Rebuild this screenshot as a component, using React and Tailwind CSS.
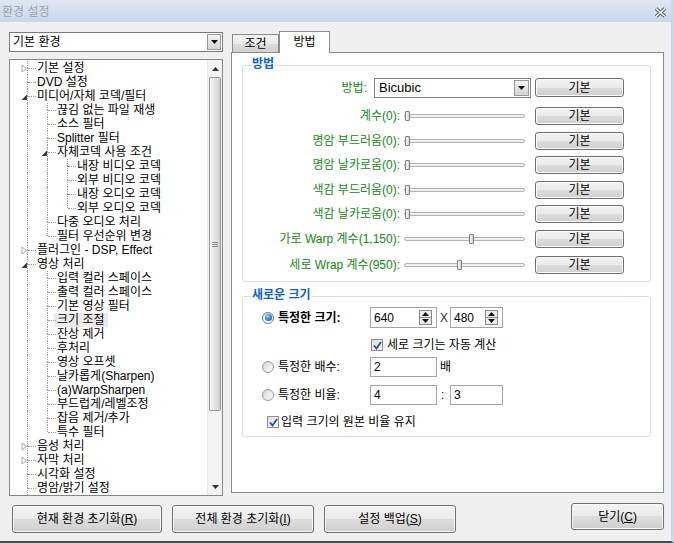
import React from "react";

const treeRows = [
  { t: "기본 설정", l: 0, e: false },
  { t: "DVD 설정", l: 0 },
  { t: "미디어/자체 코덱/필터", l: 0, e: true },
  { t: "끊김 없는 파일 재생", l: 1 },
  { t: "소스 필터", l: 1 },
  { t: "Splitter 필터", l: 1 },
  { t: "자체코덱 사용 조건", l: 1, e: true },
  { t: "내장 비디오 코덱", l: 2 },
  { t: "외부 비디오 코덱", l: 2 },
  { t: "내장 오디오 코덱", l: 2 },
  { t: "외부 오디오 코덱", l: 2 },
  { t: "다중 오디오 처리", l: 1 },
  { t: "필터 우선순위 변경", l: 1 },
  { t: "플러그인 - DSP, Effect", l: 0, e: false },
  { t: "영상 처리", l: 0, e: true },
  { t: "입력 컬러 스페이스", l: 1 },
  { t: "출력 컬러 스페이스", l: 1 },
  { t: "기본 영상 필터", l: 1 },
  { t: "크기 조절", l: 1, sel: true },
  { t: "잔상 제거", l: 1 },
  { t: "후처리", l: 1 },
  { t: "영상 오프셋", l: 1 },
  { t: "날카롭게(Sharpen)", l: 1 },
  { t: "(a)WarpSharpen", l: 1 },
  { t: "부드럽게/레벨조정", l: 1 },
  { t: "잡음 제거/추가", l: 1 },
  { t: "특수 필터", l: 1 },
  { t: "음성 처리", l: 0, e: false },
  { t: "자막 처리", l: 0, e: false },
  { t: "시각화 설정", l: 0 },
  { t: "명암/밝기 설정", l: 0 },
];

// does the line at level L continue below row i
const continues = (i, L) => {
  for (let j = i + 1; j < treeRows.length; j++) {
    if (treeRows[j].l < L) return false;
    if (treeRows[j].l === L) return true;
  }
  return L === 0;
};

const sliders = [
  { label: "계수(0):", pos: 0, mt: "mt-[10px]" },
  { label: "명암 부드러움(0):", pos: 0, mt: "mt-[7px]" },
  { label: "명암 날카로움(0):", pos: 0, mt: "mt-[6px]" },
  { label: "색감 부드러움(0):", pos: 0, mt: "mt-[7px]" },
  { label: "색감 날카로움(0):", pos: 0, mt: "mt-[6px]" },
  { label: "가로 Warp 계수(1,150):", pos: 64, mt: "mt-[7px]" },
  { label: "세로 Wrap 계수(950):", pos: 52, mt: "mt-[8px]" },
];

const Btn = ({ className, children }) => (
  <div
    className={`flex items-center justify-center border border-[#707070] rounded-[3px] bg-[linear-gradient(#f3f3f3_0%,#ebebeb_50%,#dddddd_50%,#cfcfcf_100%)] shadow-[inset_0_0_0_1px_#fbfbfb] text-black ${className}`}
  >
    {children}
  </div>
);

const DownArrow = () => (
  <svg width="7" height="4" viewBox="0 0 7 4">
    <polygon points="0,0 7,0 3.5,4" fill="#111" />
  </svg>
);

const Group = ({ label, className, children }) => (
  <div className={`relative border border-[#d5dfe5] rounded-[3px] ${className}`}>
    <span className="absolute left-[8px] top-[-9px] bg-white px-[1px] font-bold text-[#0b62d4] leading-[14px]">
      {label}
    </span>
    {children}
  </div>
);

const Radio = ({ on }) =>
  on ? (
    <div className="w-[12px] h-[12px] rounded-full border border-[#6d7b8a] bg-[linear-gradient(#dfe3e8,#ffffff)] flex items-center justify-center">
      <div className="w-[7px] h-[7px] rounded-full bg-[radial-gradient(circle_at_40%_35%,#9fe0ff_0%,#2a8fe0_45%,#0b4d95_100%)]" />
    </div>
  ) : (
    <div className="w-[12px] h-[12px] rounded-full border border-[#9a9a9a] bg-[linear-gradient(135deg,#d8d8d8,#fbfbfb)]" />
  );

const Check = () => (
  <div className="w-[12px] h-[12px] border border-[#8e8f8f] bg-[linear-gradient(135deg,#dcdcdc,#fafafa)] flex items-center justify-center">
    <svg width="9" height="9" viewBox="0 0 9 9">
      <path d="M1 4.5 L3.5 7.5 L8 1" stroke="#2a4a9a" strokeWidth="1.8" fill="none" />
    </svg>
  </div>
);

const Spin = () => (
  <div className="w-[13px] h-[15px] border border-[#8a8a8a] bg-[#ececec] flex flex-col">
    <div className="flex-1 flex items-center justify-center border-b border-[#8a8a8a]">
      <svg width="7" height="4" viewBox="0 0 7 4">
        <polygon points="0,4 7,4 3.5,0" fill="#111" />
      </svg>
    </div>
    <div className="flex-1 flex items-center justify-center">
      <DownArrow />
    </div>
  </div>
);

const TextBox = ({ className, value, spin }) => (
  <div className={`h-[20px] border border-[#a5a5a5] bg-white flex items-center pl-[3px] ${className}`}>
    <span className="flex-1">{value}</span>
    {spin && (
      <div className="mr-[4px]">
        <Spin />
      </div>
    )}
  </div>
);

const TreeRow = ({ row, i }) => {
  const cols = [];
  for (let L = 0; L <= row.l; L++) {
    const own = L === row.l;
    const cont = continues(i, L);
    cols.push(
      <div key={L} className="relative w-[20px] h-[14px] shrink-0">
        {!own && cont && (
          <span className="absolute left-[10px] top-0 h-[14px] border-l border-dotted border-[#a0a0a0]" />
        )}
        {own && (
          <>
            <span className="absolute left-[10px] top-0 h-[7px] border-l border-dotted border-[#a0a0a0]" />
            {cont && (
              <span className="absolute left-[10px] top-[7px] h-[7px] border-l border-dotted border-[#a0a0a0]" />
            )}
            <span className="absolute left-[11px] top-[7px] w-[8px] border-t border-dotted border-[#a0a0a0]" />
          </>
        )}
        {own && row.e === false && (
          <svg className="absolute left-[4px] top-[3px]" width="7" height="9" viewBox="0 0 7 9">
            <polygon points="1,1 5.5,4.5 1,8" fill="#fff" stroke="#a6a6a6" strokeWidth="1" />
          </svg>
        )}
        {own && row.e === true && (
          <svg className="absolute left-[4px] top-[5px]" width="7" height="7" viewBox="0 0 7 7">
            <polygon points="6,0.5 6,6 0.5,6" fill="#3a3a3a" />
          </svg>
        )}
      </div>
    );
  }
  return (
    <div className="flex items-center h-[14px] pl-[7px] whitespace-nowrap">
      {cols}
      <span className={`ml-[-3px] px-[3px] leading-[14px] ${row.sel ? "bg-[#ebebeb]" : ""}`}>{row.t}</span>
    </div>
  );
};

const App = () => {
  return (
    <div className="w-[674px] h-[543px] bg-[#f0f0f0] flex flex-col overflow-hidden border-r-[3px] border-r-[#c9d9ea] border-b-2 border-b-[#4a4a4a] text-[12px] leading-[14px] text-black font-['Liberation_Sans','Noto_Sans_CJK_KR',sans-serif]">
      {/* title bar */}
      <div className="h-[22px] shrink-0 flex items-center justify-between pl-[2px] pr-[4px] pt-[2px] bg-[linear-gradient(#dfe8f2,#c8d8e9)]">
        <span className="text-[#9ea4ab]">환경 설정</span>
        <svg width="13" height="11" viewBox="0 0 13 11">
          <path d="M2 1.5 L11 9.5 M11 1.5 L2 9.5" stroke="#5b6470" strokeWidth="3.6" />
          <path d="M2 1.5 L11 9.5 M11 1.5 L2 9.5" stroke="#ffffff" strokeWidth="1.4" />
        </svg>
      </div>

      <div className="flex pl-[9px] pt-[9px]">
        {/* left column */}
        <div className="w-[214px] flex flex-col">
          <div className="mt-[1px] h-[20px] border border-[#7a7a7a] bg-white flex items-center justify-between pl-[3px] pr-[1px]">
            <span>기본 환경</span>
            <div className="w-[14px] h-[16px] border border-[#9a9a9a] bg-[linear-gradient(#f4f4f4,#d4d4d4)] flex items-center justify-center">
              <DownArrow />
            </div>
          </div>
          <div className="mt-[7px] h-[437px] border border-[#828790] bg-white flex">
            <div className="flex-1 overflow-hidden pt-[1px]">
              {treeRows.map((row, i) => (
                <TreeRow key={i} row={row} i={i} />
              ))}
            </div>
            <div className="w-[15px] flex flex-col bg-[#f3f3f3] border-l border-[#ebebeb]">
              <div className="h-[17px] flex items-center justify-center">
                <svg width="7" height="4" viewBox="0 0 7 4">
                  <polygon points="0,4 7,4 3.5,0" fill="#333" />
                </svg>
              </div>
              <div className="h-[334px] mx-[1px] border border-[#979797] rounded-[2px] bg-[linear-gradient(90deg,#f6f6f6,#e4e4e4_55%,#cfcfcf)] flex flex-col items-center justify-center gap-[1px]">
                <div className="w-[6px] h-[1px] bg-[#8a8a8a]" />
                <div className="w-[6px] h-[1px] bg-[#8a8a8a]" />
                <div className="w-[6px] h-[1px] bg-[#8a8a8a]" />
              </div>
              <div className="flex-1" />
              <div className="h-[17px] flex items-center justify-center">
                <svg width="7" height="4" viewBox="0 0 7 4">
                  <polygon points="0,0 7,0 3.5,4" fill="#333" />
                </svg>
              </div>
            </div>
          </div>
        </div>

        {/* right column */}
        <div className="ml-[8px] w-[433px] flex flex-col">
          <div className="h-[22px] flex items-end pl-[1px] mb-[-1px]">
            <div className="w-[47px] h-[19px] border border-b-0 border-[#898c95] bg-[linear-gradient(#f3f3f3_0%,#ebebeb_50%,#dddddd_50%,#cfcfcf_100%)] flex items-center justify-center">
              조건
            </div>
            <div className="relative z-10 w-[51px] h-[22px] border border-b-0 border-[#898c95] bg-white flex items-center justify-center pb-[1px]">
              방법
            </div>
          </div>
          <div className="h-[441px] border border-[#898c95] bg-white flex flex-col">
            <Group label="방법" className="ml-[10px] mt-[12px] w-[409px] pt-[12px] pb-[7px]">
              <div className="flex items-center h-[19px]">
                <div className="w-[124px] text-right text-[#128a12]">방법:</div>
                <div className="ml-[7px] w-[157px] h-[20px] border border-[#828282] bg-white flex items-center justify-between pl-[4px] pr-[1px] text-[13px]">
                  <span>Bicubic</span>
                  <div className="w-[15px] h-[16px] border border-[#9a9a9a] bg-[linear-gradient(#f4f4f4,#d4d4d4)] flex items-center justify-center">
                    <DownArrow />
                  </div>
                </div>
                <Btn className="ml-[4px] w-[89px] h-[19px]">기본</Btn>
              </div>
              {sliders.map((s) => (
                <div key={s.label} className={`flex items-center h-[18px] ${s.mt}`}>
                  <div className="w-[157px] text-right text-[#128a12] whitespace-nowrap">{s.label}</div>
                  <div className="relative ml-[4px] w-[121px] h-[4px] border border-[#b4b4b4] rounded-[2px] bg-[#eef0f0]">
                    <div
                      className="absolute top-[-4px] w-[5px] h-[10px] border border-[#7d7d7d] rounded-[1px] bg-[linear-gradient(90deg,#fdfdfd,#d2d2d2)]"
                      style={{ left: s.pos }}
                    />
                  </div>
                  <Btn className="ml-[10px] w-[89px] h-[18px]">기본</Btn>
                </div>
              ))}
            </Group>

            <Group label="새로운 크기" className="ml-[10px] mt-[14px] w-[409px] pt-[10px] pb-[4px]">
              <div className="flex items-center h-[21px] pl-[19px]">
                <Radio on />
                <div className="ml-[4px] w-[92px] font-bold">특정한 크기:</div>
                <TextBox className="w-[67px] h-[21px]" value="640" spin />
                <span className="ml-[3px] w-[7px] text-[#333]">X</span>
                <TextBox className="ml-[3px] w-[53px] h-[21px]" value="480" spin />
              </div>
              <div className="flex items-center h-[20px] mt-[7px] pl-[128px]">
                <Check />
                <span className="ml-[4px]">세로 크기는 자동 계산</span>
              </div>
              <div className="flex items-center h-[20px] mt-[2px] pl-[19px]">
                <Radio />
                <div className="ml-[4px] w-[92px]">특정한 배수:</div>
                <TextBox className="w-[67px]" value="2" />
                <span className="ml-[3px]">배</span>
              </div>
              <div className="flex items-center h-[20px] mt-[8px] pl-[19px]">
                <Radio />
                <div className="ml-[4px] w-[92px]">특정한 비율:</div>
                <TextBox className="w-[67px]" value="4" />
                <span className="ml-[4px] w-[6px]">:</span>
                <TextBox className="ml-[3px] w-[53px]" value="3" />
              </div>
              <div className="flex items-center h-[20px] mt-[7px] pl-[24px]">
                <Check />
                <span className="ml-[2px]">입력 크기의 원본 비율 유지</span>
              </div>
            </Group>
          </div>
        </div>
      </div>

      {/* bottom buttons */}
      <div className="flex items-start mt-[7px] pl-[12px]">
        <Btn className="mt-[2px] w-[150px] h-[28px]">
          현재 환경 초기화(<u>R</u>)
        </Btn>
        <Btn className="mt-[2px] ml-[10px] w-[142px] h-[28px]">
          전체 환경 초기화(<u>I</u>)
        </Btn>
        <Btn className="mt-[2px] ml-[10px] w-[132px] h-[28px]">
          설정 백업(<u>S</u>)
        </Btn>
        <Btn className="ml-[115px] w-[93px] h-[27px]">
          닫기(<u>C</u>)
        </Btn>
      </div>
    </div>
  );
};

export default App;
